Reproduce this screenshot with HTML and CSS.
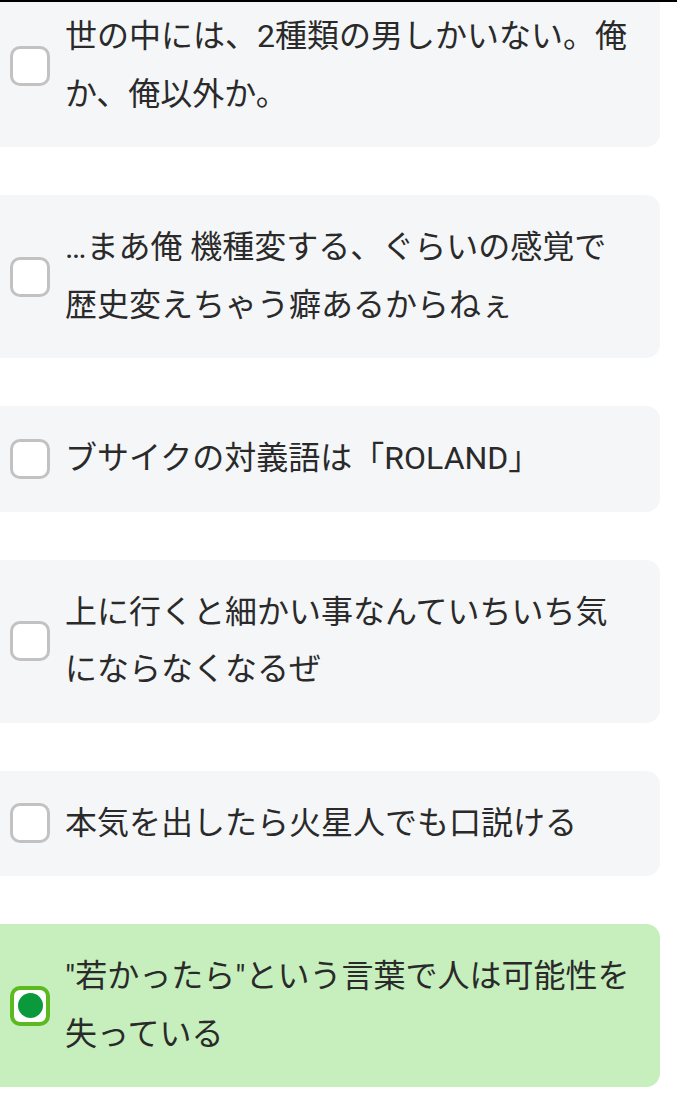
FILE: index.html
```html
<!DOCTYPE html>
<html lang="ja">
<head>
  <meta charset="UTF-8">
  <meta name="viewport" content="width=device-width, initial-scale=1.0">
  <title>俺か、俺以外か</title>
  <link rel="stylesheet" href="styles.css">
</head>
<body>
  <div class="top-line"></div>
  <!-- Quiz options -->
  <div class="options">
    <label class="option">
      <span class="box"></span>
      <span class="text">世の中には、2種類の男しかいない。俺か、俺以外か。</span>
    </label>
    <label class="option">
      <span class="box"></span>
      <span class="text">…まあ俺 機種変する、ぐらいの感覚で歴史変えちゃう癖あるからねぇ</span>
    </label>
    <label class="option">
      <span class="box"></span>
      <span class="text">ブサイクの対義語は「ROLAND」</span>
    </label>
    <label class="option">
      <span class="box"></span>
      <span class="text">上に行くと細かい事なんていちいち気にならなくなるぜ</span>
    </label>
    <label class="option">
      <span class="box"></span>
      <span class="text">本気を出したら火星人でも口説ける</span>
    </label>
    <label class="option selected">
      <span class="box"><span class="dot"></span></span>
      <span class="text">"若かったら"という言葉で人は可能性を失っている</span>
    </label>
  </div>
</body>
</html>
```

FILE: styles.css
```css
body {
  margin: 0;
  padding: 0;
  background: #fff;
  font-family: Roboto, "Noto Sans CJK JP", sans-serif;
  color: #2a2a2a;
  overflow: hidden;
}

.top-line {
  position: fixed;
  top: 0;
  left: 0;
  right: 0;
  height: 2px;
  background: #000;
  z-index: 2;
}

.options {
  display: flex;
  flex-direction: column;
  gap: 48px;
  margin-top: -16px;
  margin-right: 17px;
  margin-left: -14px;
}

.option {
  display: flex;
  align-items: center;
  gap: 15px;
  padding: 24px;
  background: #f5f6f8;
  border-radius: 14px;
  cursor: pointer;
}

.option .box {
  flex: none;
  width: 34px;
  height: 34px;
  border: 3px solid #c2c2c2;
  border-radius: 10px;
  background: #fff;
  display: flex;
  align-items: center;
  justify-content: center;
}

.option .text {
  font-size: 32px;
  line-height: 57.5px;
}

.option.selected {
  background: #c6efbd;
}

.option.selected .box {
  width: 32px;
  height: 32px;
  border: 4px solid #5cb91f;
}

.option .dot {
  width: 25px;
  height: 25px;
  border-radius: 50%;
  background: #0b9a3b;
}
```
